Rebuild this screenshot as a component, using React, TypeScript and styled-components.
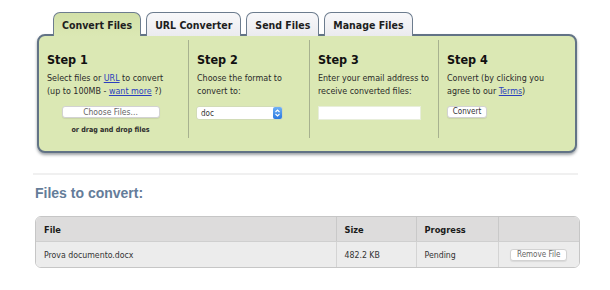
import * as React from "react";
import styled, { createGlobalStyle } from "styled-components";

const GlobalStyle = createGlobalStyle`
  html, body {
    margin: 0;
    padding: 0;
    background: #ffffff;
  }
  body {
    font-family: "DejaVu Sans Condensed", "DejaVu Sans", sans-serif;
    color: #222;
  }
`;

const tabs = ["Convert Files", "URL Converter", "Send Files", "Manage Files"];

const SelectArrows = () => (
  <svg width="9" height="12" viewBox="0 0 9 12">
    <defs>
      <linearGradient id="sel" x1="0" y1="0" x2="0" y2="1">
        <stop offset="0" stopColor="#6fb1f5" />
        <stop offset="1" stopColor="#2a78e0" />
      </linearGradient>
    </defs>
    <rect x="0" y="0" width="9" height="12" rx="2" fill="url(#sel)" />
    <path d="M2.5 5 L4.5 3 L6.5 5" stroke="#fff" strokeWidth="1.1" fill="none" />
    <path d="M2.5 7 L4.5 9 L6.5 7" stroke="#fff" strokeWidth="1.1" fill="none" />
  </svg>
);

const App = () => {
  return (
    <Page>
      <GlobalStyle />
      <TabBar>
        {tabs.map((t, i) => (
          <Tab key={t} $active={i === 0}>
            {t}
          </Tab>
        ))}
      </TabBar>
      <Panel>
        <Column>
          <StepTitle>Step 1</StepTitle>
          <StepText>
            Select files or <Link>URL</Link> to convert
            <br />
            (up to 100MB - <Link>want more</Link> ?)
          </StepText>
          <Centered>
            <Button $width={98} $size={8.5}>
              Choose Files...
            </Button>
            <DropHint>or drag and drop files</DropHint>
          </Centered>
        </Column>
        <Column $divided>
          <StepTitle>Step 2</StepTitle>
          <StepText>
            Choose the format to
            <br />
            convert to:
          </StepText>
          <Select>
            <span>doc</span>
            <SelectArrows />
          </Select>
        </Column>
        <Column $divided>
          <StepTitle>Step 3</StepTitle>
          <StepText>
            Enter your email address to
            <br />
            receive converted files:
          </StepText>
          <EmailInput />
        </Column>
        <Column $divided>
          <StepTitle>Step 4</StepTitle>
          <StepText>
            Convert (by clicking you
            <br />
            agree to our <Link>Terms</Link>)
          </StepText>
          <Button $width={40} $size={8} $dark>
            Convert
          </Button>
        </Column>
      </Panel>

      <Separator />

      <FilesTitle>Files to convert:</FilesTitle>

      <TableWrap>
        <Table>
          <colgroup>
            <col style={{ width: 300 }} />
            <col style={{ width: 80 }} />
            <col style={{ width: 82 }} />
            <col />
          </colgroup>
          <thead>
            <tr>
              <Th>File</Th>
              <Th>Size</Th>
              <Th>Progress</Th>
              <Th />
            </tr>
          </thead>
          <tbody>
            <tr>
              <Td>Prova documento.docx</Td>
              <Td>482.2 KB</Td>
              <Td>Pending</Td>
              <Td>
                <Button $width={57} $size={8}>
                  Remove File
                </Button>
              </Td>
            </tr>
          </tbody>
        </Table>
      </TableWrap>
    </Page>
  );
};

const Page = styled.div`
  width: 610px;
  height: 290px;
  padding: 12px 0 0 37px;
  box-sizing: border-box;
  overflow: hidden;
`;

const TabBar = styled.div`
  display: flex;
  gap: 5px;
  padding-left: 16px;
  position: relative;
  z-index: 2;
  margin-bottom: -2px;
`;

const Tab = styled.div<{ $active?: boolean }>`
  height: 24px;
  padding: 0 8px;
  box-sizing: border-box;
  display: flex;
  align-items: center;
  justify-content: center;
  font-weight: bold;
  font-size: 10.5px;
  color: #1e1e1e;
  border: 1.5px solid #6c7c8e;
  border-bottom: none;
  border-radius: 7px 7px 0 0;
  background: ${(p) =>
    p.$active
      ? "linear-gradient(#d2e0a8, #dbe8b4)"
      : "linear-gradient(#f8f8fa, #ebebef)"};
`;

const Panel = styled.div`
  position: relative;
  z-index: 1;
  width: 540px;
  height: 119px;
  box-sizing: border-box;
  border: 2px solid #627386;
  border-radius: 8px;
  background: #dbe8b4;
  box-shadow: 0 2px 3px rgba(40, 50, 60, 0.45);
  display: grid;
  grid-template-columns: 149px 121px 129px 1fr;
  padding: 4px 0 13px;
`;

const Column = styled.div<{ $divided?: boolean }>`
  padding: 0 8px;
  border-left: ${(p) => (p.$divided ? "1px solid #a7b18f" : "none")};
  display: flex;
  flex-direction: column;
  align-items: flex-start;
`;

const StepTitle = styled.div`
  margin-top: 13px;
  font-size: 12.5px;
  line-height: 14px;
  font-weight: bold;
  color: #111;
`;

const StepText = styled.div`
  margin-top: 5px;
  margin-bottom: 8px;
  font-size: 8.9px;
  line-height: 13px;
  color: #2a2a2a;
  white-space: nowrap;
`;

const Link = styled.a`
  color: #2b3fbf;
  text-decoration: underline;
`;

const Centered = styled.div`
  align-self: stretch;
  display: flex;
  flex-direction: column;
  align-items: center;
  padding-right: 6px;
`;

const Button = styled.div<{ $width: number; $size: number; $dark?: boolean }>`
  width: ${(p) => p.$width}px;
  height: 12px;
  box-sizing: border-box;
  background: #fff;
  border: 1px solid #d2d2d2;
  border-radius: 3px;
  font-size: ${(p) => p.$size}px;
  line-height: 10px;
  text-align: center;
  white-space: nowrap;
  color: ${(p) => (p.$dark ? "#333" : "#666")};
  box-shadow: 0 1px 1px rgba(0, 0, 0, 0.08);
`;

const DropHint = styled.div`
  margin-top: 6px;
  font-size: 7.1px;
  line-height: 12px;
  font-weight: bold;
  color: #2a2a2a;
`;

const Select = styled.div`
  margin-top: 1px;
  width: 85px;
  height: 12px;
  box-sizing: border-box;
  background: #fff;
  border-radius: 2px;
  display: flex;
  align-items: center;
  justify-content: space-between;
  padding-left: 4px;
  font-size: 8px;
  color: #333;
  box-shadow: 0 0 0 0.5px #c9cfba;
`;

const EmailInput = styled.div`
  width: 103px;
  height: 14px;
  box-sizing: border-box;
  background: #fff;
  border: 1px solid #e8eedb;
`;

const Separator = styled.div`
  width: 545px;
  height: 2px;
  margin: 20px 0 0 -4px;
  background: #f0f0f0;
`;

const FilesTitle = styled.div`
  margin: 10px 0 0 -2px;
  font-family: "Liberation Sans", Arial, sans-serif;
  font-weight: bold;
  font-size: 14px;
  line-height: 17px;
  color: #647c99;
`;

const TableWrap = styled.div`
  margin: 14px 0 0 -2px;
  width: 543px;
  border: 1px solid #c6c6c6;
  border-radius: 6px;
  overflow: hidden;
`;

const Table = styled.table`
  width: 100%;
  border-collapse: collapse;
  table-layout: fixed;
`;

const Th = styled.th`
  height: 24px;
  padding: 0 8px;
  text-align: left;
  font-size: 9.2px;
  font-weight: bold;
  color: #1a1a1a;
  background: #dddcdc;
  border-left: 1px solid #c9c9c9;
  border-bottom: 1px solid #cfcfcf;
  &:first-child {
    border-left: none;
  }
`;

const Td = styled.td`
  height: 25px;
  padding: 0 8px;
  font-size: 8.7px;
  color: #333;
  background: #ececec;
  border-left: 1px solid #d4d4d4;
  &:first-child {
    border-left: none;
  }
  & > div {
    margin: 0 auto;
  }
`;

export default App;
